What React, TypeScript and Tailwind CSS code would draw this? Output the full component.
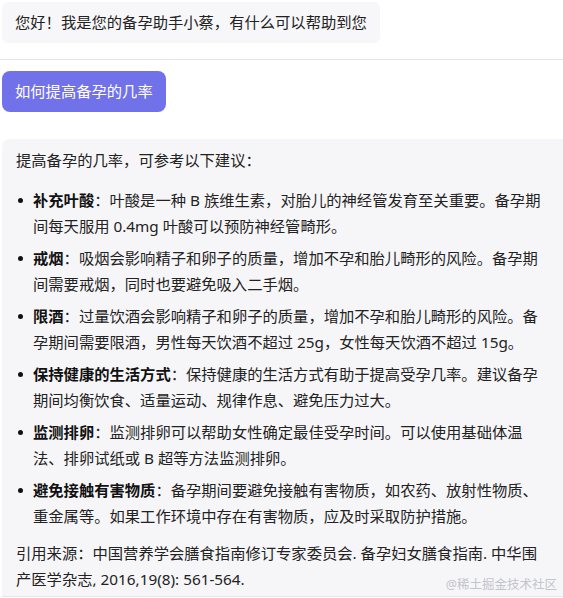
import React from "react";

interface Tip {
  title: string;
  body: string;
}

const tips: Tip[] = [
  {
    title: "补充叶酸",
    body: "叶酸是一种 B 族维生素，对胎儿的神经管发育至关重要。备孕期间每天服用 0.4mg 叶酸可以预防神经管畸形。",
  },
  {
    title: "戒烟",
    body: "吸烟会影响精子和卵子的质量，增加不孕和胎儿畸形的风险。备孕期间需要戒烟，同时也要避免吸入二手烟。",
  },
  {
    title: "限酒",
    body: "过量饮酒会影响精子和卵子的质量，增加不孕和胎儿畸形的风险。备孕期间需要限酒，男性每天饮酒不超过 25g，女性每天饮酒不超过 15g。",
  },
  {
    title: "保持健康的生活方式",
    body: "保持健康的生活方式有助于提高受孕几率。建议备孕期间均衡饮食、适量运动、规律作息、避免压力过大。",
  },
  {
    title: "监测排卵",
    body: "监测排卵可以帮助女性确定最佳受孕时间。可以使用基础体温法、排卵试纸或 B 超等方法监测排卵。",
  },
  {
    title: "避免接触有害物质",
    body: "备孕期间要避免接触有害物质，如农药、放射性物质、重金属等。如果工作环境中存在有害物质，应及时采取防护措施。",
  },
];

const App: React.FC = () => {
  return (
    <div
      className="relative w-[563px] h-[598px] overflow-hidden bg-white text-[#222] text-[15.3px]"
      style={{ fontFamily: '"Noto Sans", "Noto Sans CJK SC", sans-serif' }}
    >
      {/* greeting bubble */}
      <div className="pt-[2px] pl-[2px]">
        <div className="inline-block h-[41px] px-[13px] leading-[41px] rounded-md bg-[#f7f7f9]">
          您好！我是您的备孕助手小蔡，有什么可以帮助到您
        </div>
      </div>

      <div className="mt-[16px] h-px bg-[#e6e6e8]" />

      {/* user question */}
      <div className="mt-[11px] pl-[2px]">
        <div className="inline-block h-[41px] px-[13px] leading-[41px] rounded-lg bg-[#7171ea] text-white">
          如何提高备孕的几率
        </div>
      </div>

      {/* answer */}
      <div className="mt-[27px] ml-[2px] w-[561px] rounded-tl-lg bg-[#f6f6f8] px-[14px] pt-[8px] pb-[4px] border-b border-[#e6e6e8] leading-[26px]">
        <p>提高备孕的几率，可参考以下建议：</p>
        <ul className="mt-[14px] flex flex-col gap-[6px]">
          {tips.map((tip) => (
            <li key={tip.title} className="flex">
              <span className="w-[17px] shrink-0 pt-[11px]">
                <span className="block ml-[2px] w-[5px] h-[5px] rounded-full bg-[#111]" />
              </span>
              <span>
                <b className="font-bold text-[#111]">{tip.title}</b>：{tip.body}
              </span>
            </li>
          ))}
        </ul>
        <p className="mt-[11px]">
          引用来源：中国营养学会膳食指南修订专家委员会. 备孕妇女膳食指南. 中华围
          <br />
          产医学杂志, 2016,19(8): 561-564.
        </p>
      </div>

      <span className="absolute right-[6px] bottom-[3px] text-[12.5px] text-[#c4c4cc]">
        @稀土掘金技术社区
      </span>
    </div>
  );
};

export default App;
